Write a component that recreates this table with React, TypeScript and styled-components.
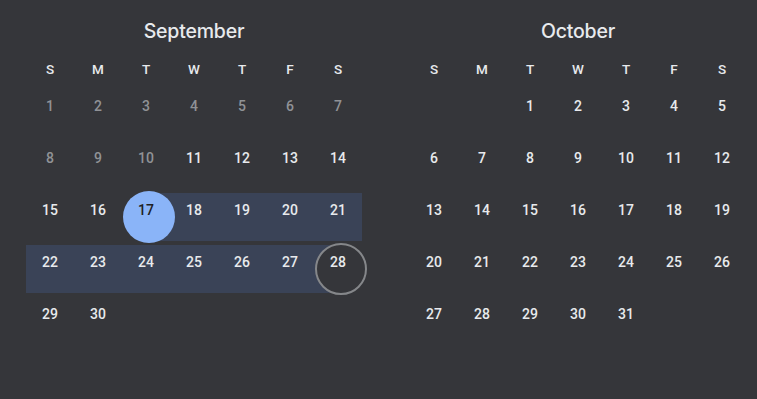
import React from 'react';
import styled, { createGlobalStyle, css } from 'styled-components';

const GlobalStyle = createGlobalStyle`
  html, body {
    margin: 0;
    background: #35363a;
  }
  body {
    font-family: Roboto, 'Noto Sans', sans-serif;
    color: #e8eaed;
  }
`;

const Page = styled.div`
  display: flex;
  gap: 48px;
  padding-left: 26px;
  width: 757px;
  height: 399px;
  box-sizing: border-box;
  background: #35363a;
`;

const Month = styled.div`
  width: 336px;
`;

const Title = styled.div`
  height: 61px;
  line-height: 62px;
  text-align: center;
  font-family: Inter, 'Open Sans', sans-serif;
  font-size: 19.5px;
  font-weight: 500;
  letter-spacing: -0.2px;
  color: #e8eaed;
`;

const Weekdays = styled.div`
  display: grid;
  grid-template-columns: repeat(7, 48px);
  height: 16px;
  margin-bottom: 12px;
`;

const Weekday = styled.div`
  text-align: center;
  font-size: 13.5px;
  line-height: 16px;
  font-weight: 500;
  color: #e8eaed;
`;

const Days = styled.div`
  display: grid;
  grid-template-columns: repeat(7, 48px);
  grid-auto-rows: 52px;
`;

type Edge = 'none' | 'start' | 'end' | 'mid';

const bandColor = '#3a4357';

const Cell = styled.div<{ $band: Edge }>`
  position: relative;
  height: 48px;
  ${({ $band }) =>
    $band === 'mid' &&
    css`
      background: ${bandColor};
    `}
  ${({ $band }) =>
    $band === 'start' &&
    css`
      background: linear-gradient(to right, transparent 50%, ${bandColor} 50%);
    `}
  ${({ $band }) =>
    $band === 'end' &&
    css`
      background: linear-gradient(to right, ${bandColor} 50%, transparent 50%);
    `}
`;

const Num = styled.div<{ $past?: boolean; $dark?: boolean }>`
  position: relative;
  z-index: 2;
  padding-top: 9px;
  text-align: center;
  font-size: 14px;
  line-height: 16px;
  font-weight: 500;
  color: ${({ $past, $dark }) => ($dark ? '#202124' : $past ? '#909296' : '#e8eaed')};
`;

const Ring = styled.div<{ $filled?: boolean }>`
  position: absolute;
  z-index: 1;
  left: 1px;
  top: -2px;
  width: 52px;
  height: 52px;
  box-sizing: border-box;
  border-radius: 50%;
  ${({ $filled }) =>
    $filled
      ? css`
          background: #8ab4f8;
        `
      : css`
          background: #35363a;
          border: 2px solid #85878a;
        `}
`;

const LETTERS = ['S', 'M', 'T', 'W', 'T', 'F', 'S'];

type MonthProps = {
  name: string;
  offset: number;
  length: number;
  pastBefore?: number;
  rangeStart?: number;
  rangeEnd?: number;
};

function MonthView({ name, offset, length, pastBefore = 0, rangeStart, rangeEnd }: MonthProps) {
  const cells: React.ReactNode[] = [];
  for (let i = 0; i < offset; i++) cells.push(<Cell key={`e${i}`} $band="none" />);

  for (let d = 1; d <= length; d++) {
    const col = (offset + d - 1) % 7;
    let band: Edge = 'none';
    if (rangeStart && rangeEnd && d >= rangeStart && d <= rangeEnd) {
      if (d === rangeStart) band = col === 6 ? 'none' : 'start';
      else if (d === rangeEnd) band = col === 0 ? 'none' : 'end';
      else band = 'mid';
    }
    const isStart = d === rangeStart;
    const isEnd = d === rangeEnd;
    cells.push(
      <Cell key={d} $band={band}>
        {(isStart || isEnd) && <Ring $filled={isStart} />}
        <Num $past={d < pastBefore} $dark={isStart}>
          {d}
        </Num>
      </Cell>
    );
  }

  return (
    <Month>
      <Title>{name}</Title>
      <Weekdays>
        {LETTERS.map((l, i) => (
          <Weekday key={i}>{l}</Weekday>
        ))}
      </Weekdays>
      <Days>{cells}</Days>
    </Month>
  );
}

export default function App() {
  return (
    <>
      <GlobalStyle />
      <Page>
        <MonthView name="September" offset={0} length={30} pastBefore={11} rangeStart={17} rangeEnd={28} />
        <MonthView name="October" offset={2} length={31} />
      </Page>
    </>
  );
}
